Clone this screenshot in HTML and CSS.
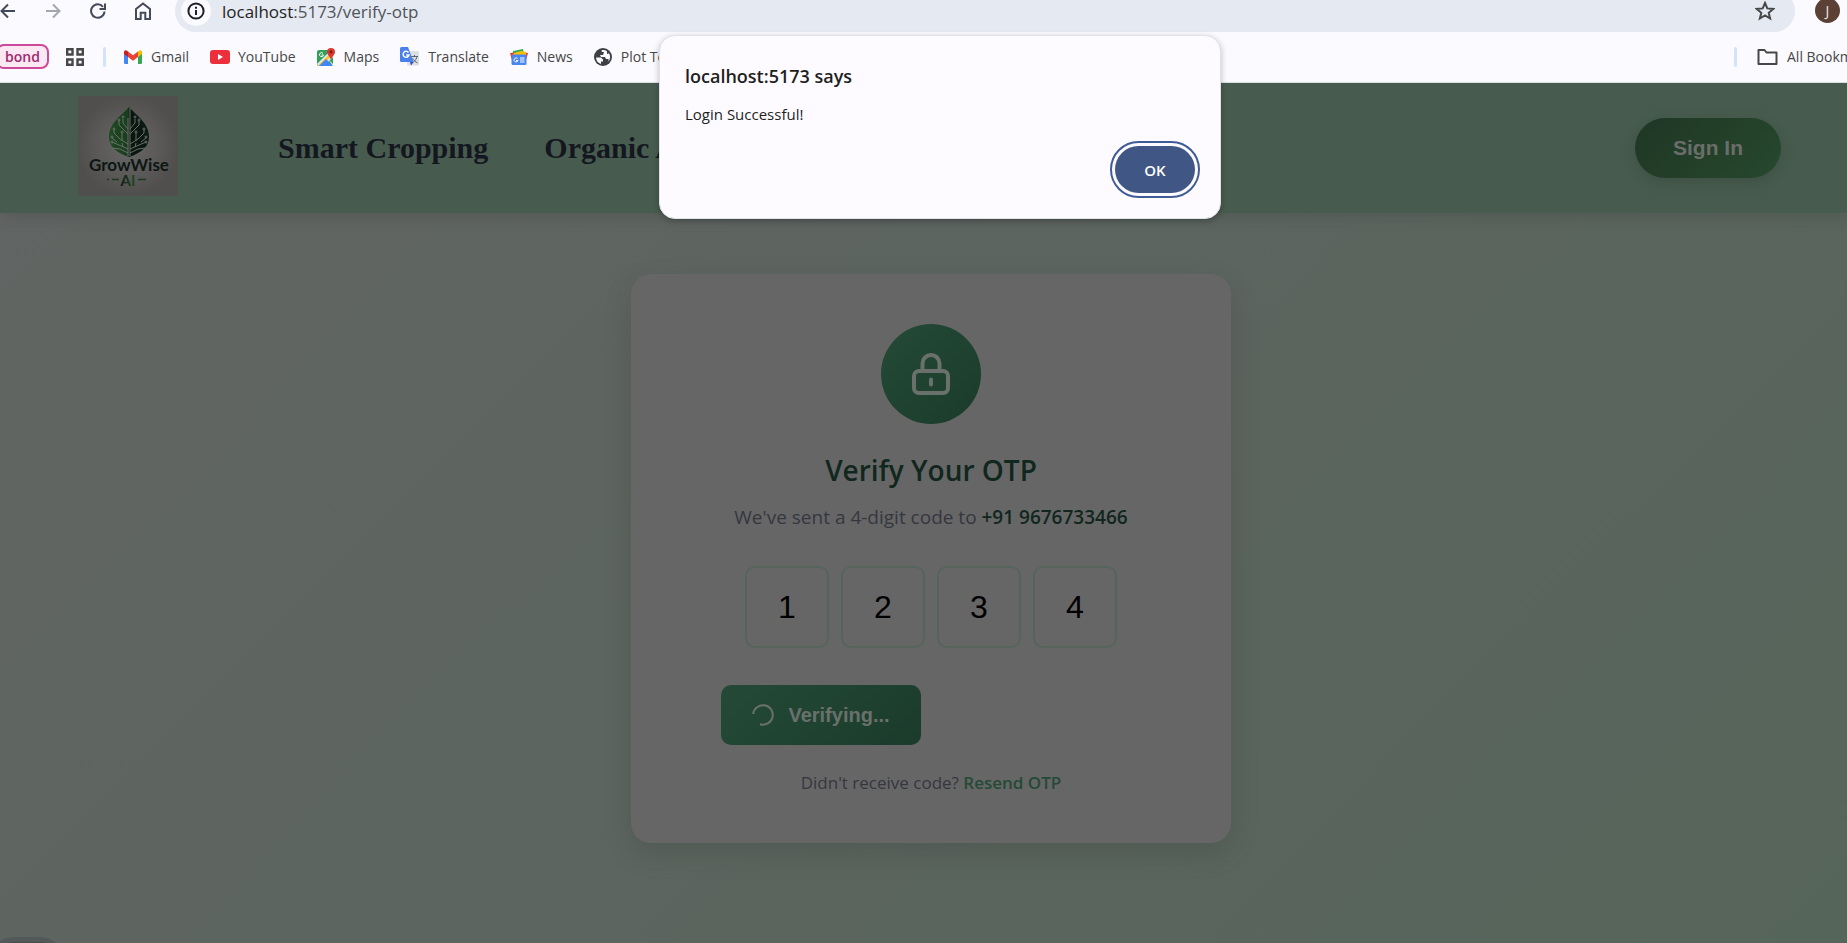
FILE: index.html
```html
<!DOCTYPE html>
<html lang="en">
<head>
<meta charset="utf-8">
<title>GrowWise AI - Verify OTP</title>
<link rel="stylesheet" href="styles.css">
</head>
<body>
<div class="browser">
  <div class="toolbar">
    <button class="tool" aria-label="Back"><svg width="16" height="16" viewBox="0 0 16 16"><path d="M15 8H1.500M8 1.500 1.500 8 8 14.500"/></svg></button>
    <button class="tool tool-off" aria-label="Forward"><svg width="16" height="16" viewBox="0 0 16 16"><path d="M1 8h13.500M8 1.500 14.500 8 8 14.500"/></svg></button>
    <button class="tool" aria-label="Reload"><svg width="16" height="16" viewBox="0 0 16 16"><path d="M14.500 8.500A6.700 6.700 0 1 1 13 3.800M15 0.500V6H9.500"/></svg></button>
    <button class="tool" aria-label="Home"><svg width="16" height="18" viewBox="0 0 16 18"><path d="M1 7 8 1.500 15 7v10h-4.700v-6.200H5.700V17H1z"/></svg></button>
    <div class="address">
      <button class="site-info" aria-label="Site information"><svg width="18" height="18" viewBox="0 0 18 18"><circle cx="9" cy="9" r="7.600"/><path d="M9 8v5M9 4.800v1.900"/></svg></button>
      <span class="url">localhost<span class="url-path">:5173/verify-otp</span></span>
      <button class="star" aria-label="Bookmark this tab"><svg width="20" height="20" viewBox="0 0 20 20"><path d="m10 2 2.300 5.400 5.900.5-4.500 3.900 1.400 5.700L10 14.400l-5.100 3.100 1.400-5.700-4.500-3.900 5.900-.5z"/></svg></button>
    </div>
    <button class="avatar" aria-label="Profile">J</button>
  </div>
  <nav class="bookmarks">
    <button class="chip">bond</button>
    <button class="apps" aria-label="Tab groups"><svg width="18" height="18" viewBox="0 0 18 18"><path d="M1.200 1.200h5.300v5.300H1.200zM11.500 1.200h5.300v5.300h-5.300zM1.200 11.500h5.300v5.300H1.200zM11.500 11.500h5.300v5.300h-5.300z"/></svg></button>
    <span class="bar"></span>
    <a class="mark mark-gmail" href="#"><svg width="18" height="14" viewBox="0 0 18 14"><path fill="#4285f4" d="M0 2v10.800Q0 14 1.200 14H4V5z"/><path fill="#34a853" d="M18 2v10.800q0 1.200-1.200 1.200H14V5z"/><path fill="#fbbc04" d="M14 1.500V7l4-3V2q-.3-3-4-.5z"/><path fill="#c5221f" d="M4 1.500V7L0 4V2q.3-3 4-.5z"/><path fill="#ea4335" d="M4 1.500 9 5.300l5-3.800V7l-5 3.800L4 7z"/></svg>Gmail</a>
    <a class="mark mark-youtube" href="#"><svg width="20" height="14" viewBox="0 0 20 14"><rect width="20" height="14" rx="3" fill="#ed2f3b"/><path fill="#fff" d="m8 4 5 3-5 3z"/></svg>YouTube</a>
    <a class="mark" href="#"><svg width="18" height="18" viewBox="0 0 18 18"><rect y="2" width="16" height="16" rx="2" fill="#34a05a"/><path fill="#dfe8f5" d="M0 16 13 3l3 2v4L7 18H2z"/><path fill="#fbc02d" d="m1 17.500 12-12 2 2L4.500 18H2z"/><path fill="#4285f4" d="m9 11 7 7H2z"/><path fill="#dfe8f5" d="m10 10 6 6v2z"/><path fill="none" stroke="#fff" d="M6 5.300A2 2 0 1 0 6.500 7H4.500"/><path fill="#d93a2f" d="M14 0a4 4 0 0 1 4 4c0 3-3 4-4 8-1-4-4-5-4-8a4 4 0 0 1 4-4"/><circle cx="14" cy="4" r="1.400" fill="#7c1810"/></svg>Maps</a>
    <a class="mark" href="#"><svg width="19" height="19" viewBox="0 0 19 19"><rect x="7" y="4" width="12" height="14.500" rx="1.500" fill="#dcdfe3"/><path fill="none" stroke="#5b6670" d="M11 9.500h7M14.500 8v1.500M17 10c-1 3-3 5-5 5.800M12.500 11c1 2.500 3 4 5 4.800"/><path fill="#4a80ea" d="M1.500 0H8l5.500 15H1.500Q0 15 0 13.500v-12Q0 0 1.500 0z"/><path fill="#2a4fb5" d="m10 15h3.500L11 18.500z"/><path fill="none" stroke="#fff" stroke-width="1.400" d="M8.500 5.500A3 3 0 1 0 9 8H6.200"/></svg>Translate</a>
    <a class="mark" href="#"><svg width="18" height="16" viewBox="0 0 18 16"><path fill="#34a853" d="m3 2 10-2 1 5H3z"/><path fill="#ea4335" d="m0 4 4-.5V10H1.500zM18 4l-4-.5V10h2.500z"/><path fill="#fbbc04" d="m4 4 7-2 5 1v4H3z"/><rect x="1.500" y="5.500" width="15" height="10.500" rx="1.500" fill="#4a86ee"/><path fill="none" stroke="#fff" d="M7.500 9.500A2 2 0 1 0 8 11.500H6M10 9h4.500M10 11h4.500M10 13h4.500"/></svg>News</a>
    <a class="mark" href="#"><svg width="18" height="18" viewBox="0 0 18 18"><circle cx="9" cy="9" r="9" fill="#3c4043"/><path fill="#fafaff" d="M2 9.500h5l2 2v2H7V16q-4.500-1.500-5-6.500zM8 2q-1 1 0 2h2l-1 3H6l1 2h4l1 2h2.500q.5 2-1 3.200 2.700-2 2.700-5.200-.2-2-1.200-3.800L13 6V3.200Q11 1.600 8 2z"/></svg>Plot Te</a>
    <span class="bar bar-end"></span>
    <a class="mark mark-all" href="#"><svg width="21" height="16" viewBox="0 0 21 16"><path fill="none" stroke="#474747" stroke-width="2" stroke-linejoin="round" d="M1.500 1h6l2 2.500h10V15h-18z"/></svg>All Bookmarks</a>
  </nav>
</div>

<div class="page">
  <header class="site-header">
    <svg class="logo" width="100" height="100" viewBox="0 0 100 100" role="img" aria-label="GrowWise AI">
      <defs>
        <radialGradient id="plate"><stop offset="0" stop-color="#686767"/><stop offset=".6" stop-color="#5b5a59"/><stop offset="1" stop-color="#504f4d"/></radialGradient>
        <linearGradient id="leaf"><stop offset="0" stop-color="#1f4b22"/><stop offset=".48" stop-color="#193c1d"/><stop offset=".52" stop-color="#09150f"/><stop offset="1" stop-color="#0a1b12"/></linearGradient>
        <linearGradient id="ai"><stop offset="0" stop-color="#0c1714"/><stop offset="1" stop-color="#1e4d23"/></linearGradient>
      </defs>
      <rect width="100" height="100" fill="url(#plate)"/>
      <path fill="url(#leaf)" d="M51 11C43 20 31 27 31 41c0 10 8 16 20 20 12-4 20-10 20-20 0-14-12-21-20-30z"/>
      <g fill="none" stroke="#6a6e6a" stroke-width="1">
        <path d="M50 60V22M52 60V12M50 38 41 29v-4M50 33l-5-6v-4M50 48l-8-5-6-6v-3M50 53l-9-4-7-3M50 57l-8-4-8-1M44 45v-8M39 46l-5-4M45 51l-1-4"/>
        <path d="m52 38 9-9v-4M52 33l5-6v-4M52 48l8-5 6-6v-3M52 53l9-4 7-3M52 57l8-4 8-1M58 45v-8M63 46l5-4M57 51l1-4"/>
        <circle cx="41" cy="24" r="1"/><circle cx="45" cy="21" r="1"/><circle cx="61" cy="24" r="1"/><circle cx="57" cy="21" r="1"/><circle cx="36" cy="33" r="1"/><circle cx="66" cy="33" r="1"/><circle cx="34" cy="41" r="1"/><circle cx="68" cy="41" r="1"/><circle cx="44" cy="36" r="1"/><circle cx="58" cy="36" r="1"/><circle cx="34" cy="46" r="1"/><circle cx="68" cy="46" r="1"/>
      </g>
      <text class="logo-name" x="51" y="75" text-anchor="middle">GrowWise</text>
      <text class="logo-ai" x="50" y="90" text-anchor="middle" fill="url(#ai)">AI</text>
      <path stroke="#1b3a1f" stroke-width="1.300" d="M29 83.500h2M34 83.500h7M60 83.500h8"/>
    </svg>
    <nav class="menu">
      <a href="#">Smart Cropping</a>
      <a href="#">Organic A</a>
    </nav>
    <button class="sign-in">Sign In</button>
  </header>
  <main class="stage">
    <form class="card">
      <div class="badge"><svg width="40" height="44" viewBox="0 0 40 44"><rect x="3" y="19" width="34" height="22" rx="5"/><path d="M11.500 19v-7.500a8.500 8.500 0 0 1 17 0V19"/><path d="M20 27.500v5"/></svg></div>
      <h1 class="title">Verify Your OTP</h1>
      <p class="lead">We've sent a 4-digit code to <strong>+91 9676733466</strong></p>
      <div class="digits">
        <input type="text" maxlength="1" value="1" aria-label="Digit 1">
        <input type="text" maxlength="1" value="2" aria-label="Digit 2">
        <input type="text" maxlength="1" value="3" aria-label="Digit 3">
        <input type="text" maxlength="1" value="4" aria-label="Digit 4">
      </div>
      <button class="verify" type="button"><svg width="22" height="22" viewBox="0 0 22 22"><path d="M1.200 10A9.800 9.800 0 1 1 8 20.300"/></svg>Verifying...</button>
      <p class="resend">Didn't receive code? <a href="#">Resend OTP</a></p>
    </form>
  </main>
  <div class="float"></div>
</div>

<div class="dialog" role="alertdialog" aria-labelledby="dialog-title">
  <h2 class="dialog-title" id="dialog-title">localhost:5173 says</h2>
  <p class="dialog-text">Login Successful!</p>
  <button class="ok">OK</button>
</div>
</body>
</html>
```

FILE: styles.css
```css
* { box-sizing: border-box; }

body {
  margin: 0;
  height: 100vh;
  display: flex;
  flex-direction: column;
  overflow: hidden;
  position: relative;
  font-family: "Open Sans", "Noto Sans", sans-serif;
}

button { border: 0; padding: 0; background: none; cursor: pointer; }
a { text-decoration: none; }
svg { display: block; flex: none; }

/* Browser bars */
.browser {
  flex: none;
  background: #fafaff;
  border-bottom: 1px solid #dcdee6;
}

.toolbar {
  height: 32px;
  display: flex;
  align-items: flex-end;
  overflow: hidden;
}

.tool {
  flex: none;
  width: 45px;
  height: 42px;
  display: flex;
  align-items: center;
}
.tool svg { fill: none; stroke: #444a58; stroke-width: 2; }
.tool-off svg { stroke: #a5a7ad; }

.address {
  flex: 1;
  height: 42px;
  margin-left: -5px;
  margin-right: 20px;
  padding: 0 20px 0 6px;
  display: flex;
  align-items: center;
  border-radius: 21px;
  background: #e5e9f1;
}
.site-info {
  width: 30px;
  height: 30px;
  margin-right: 11px;
  display: flex;
  align-items: center;
  justify-content: center;
  border-radius: 50%;
  background: #fafaff;
}
.site-info svg { fill: none; stroke: #1f2023; stroke-width: 2; }
.url { flex: 1; font-size: 17px; color: #1f1f1f; }
.url-path { color: #50535a; }
.star svg { fill: none; stroke: #474747; stroke-width: 2; }

.avatar {
  flex: none;
  width: 25px;
  height: 25px;
  margin: 0 7px 9px 0;
  border-radius: 50%;
  background: #5b4036;
  color: #f0e8e4;
  font: 14px "Open Sans", sans-serif;
}

.bookmarks {
  height: 50px;
  padding-bottom: 1px;
  display: flex;
  align-items: center;
  overflow: hidden;
  white-space: nowrap;
}
.chip {
  flex: none;
  width: 53px;
  height: 25px;
  margin-left: -4px;
  border: 2px solid #cc4a99;
  border-radius: 8px;
  background: #fae8f3;
  color: #a0286f;
  font: 600 14px "Open Sans", sans-serif;
}
.apps { margin: 0 19px 0 17px; }
.apps svg { fill: none; stroke: #474747; stroke-width: 2.4; }
.bar { flex: none; width: 3px; height: 20px; border-radius: 2px; background: #d3e3fd; }
.bar-end { margin-left: auto; margin-right: 20px; }
.mark {
  flex: none;
  display: flex;
  align-items: center;
  gap: 9px;
  margin-left: 21px;
  font-size: 14px;
  line-height: 18px;
  color: #474747;
}
.mark-gmail { margin-left: 18px; }
.mark-youtube { gap: 8px; }
.mark-all { margin: 0; width: 90px; }

/* Site */
.page {
  flex: 1;
  display: flex;
  flex-direction: column;
  position: relative;
  overflow: hidden;
  background: linear-gradient(135deg, #626563, #5c655f 50%, #56655a);
}

.site-header {
  flex: none;
  height: 130px;
  padding: 0 66px 0 78px;
  display: flex;
  align-items: center;
  background: #475c4e;
  box-shadow: 0 4px 16px rgba(0, 0, 0, 0.12);
}
.logo { align-self: flex-start; margin-top: 13px; }
.logo-name { font: 700 17px "Lato", sans-serif; fill: #0c1714; }
.logo-ai { font: 700 15px "Lato", sans-serif; }
.menu { flex: 1; display: flex; gap: 56px; margin-left: 100px; }
.menu a { font: 700 30px "Liberation Serif", serif; color: #14171f; }

.sign-in {
  width: 146px;
  height: 60px;
  border-radius: 30px;
  background: linear-gradient(135deg, #1f3727, #233f28 50%, #27482f);
  box-shadow: 0 4px 15px rgba(0, 0, 0, 0.14);
  color: #6a6e6b;
  font: 700 21px "Liberation Sans", sans-serif;
}

.stage {
  flex: 1;
  display: flex;
  justify-content: center;
  align-items: flex-start;
  padding: 61px 0 0 15px;
}

.card {
  width: 600px;
  padding: 50px 90px 47px;
  border-radius: 20px;
  background: #666;
  box-shadow: 0 10px 30px rgba(0, 0, 0, 0.12);
  text-align: center;
}
.badge {
  width: 100px;
  height: 100px;
  margin: 0 auto 25px;
  display: flex;
  align-items: center;
  justify-content: center;
  border-radius: 50%;
  background: linear-gradient(135deg, #244a37, #1b3b2b);
}
.badge svg { fill: none; stroke: #6a706c; stroke-width: 4; stroke-linecap: round; }
.title { margin: 0; font-size: 28px; line-height: 42px; font-weight: 600; color: #11271e; }
.lead { margin: 12px 0 35px; font-size: 19px; line-height: 28px; color: #35373f; white-space: nowrap; }
.lead strong { font-weight: 600; color: #11271e; }

.digits { display: flex; justify-content: center; gap: 12px; margin-bottom: 37px; }
.digits input {
  width: 84px;
  height: 82px;
  padding: 0;
  border: 2px solid #56655b;
  border-radius: 10px;
  background: transparent;
  color: #000;
  font: 32px "Liberation Sans", sans-serif;
  text-align: center;
}

.verify {
  width: 200px;
  height: 60px;
  display: flex;
  align-items: center;
  justify-content: center;
  gap: 14px;
  border-radius: 10px;
  background: linear-gradient(135deg, #244a37, #1b3b2b);
  color: #6a706c;
  font: 700 20px "Liberation Sans", sans-serif;
}
.verify svg { fill: none; stroke: #6a706c; stroke-width: 2; }

.resend { margin: 25px 0 0; font-size: 17px; line-height: 26px; color: #35373f; }
.resend a { font-weight: 600; color: #244a37; }

.float {
  position: absolute;
  left: -10px;
  bottom: -64px;
  width: 74px;
  height: 70px;
  border: 5px solid #525958;
  border-radius: 24px;
  background: #474c50;
}

/* Alert */
.dialog {
  position: absolute;
  top: 35px;
  left: 659px;
  width: 562px;
  padding: 24px 25px 25px;
  display: flex;
  flex-direction: column;
  border: 1px solid #dfe2e8;
  border-radius: 16px;
  background: #fdfbff;
  box-shadow: 0 2px 6px rgba(0, 0, 0, 0.25);
  color: #1f1f1f;
}
.dialog-title { margin: 0; font-size: 18px; line-height: 32px; font-weight: 600; }
.dialog-text { margin: 10px 0 19px; font-size: 15px; line-height: 25px; }
.ok {
  align-self: flex-end;
  width: 80px;
  height: 47px;
  border-radius: 24px;
  background: #405685;
  outline: 2px solid #405c96;
  outline-offset: 3px;
  color: #fff;
  font: 600 15px "Open Sans", sans-serif;
}
```
